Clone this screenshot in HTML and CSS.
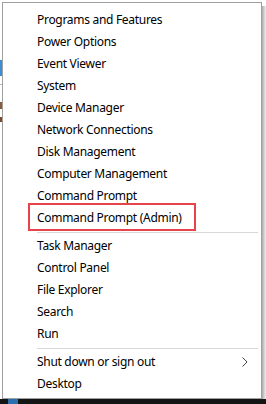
FILE: index.html
```html
<!DOCTYPE html>
<html>
<head>
  <link rel="stylesheet" href="styles.css">
</head>
<body>
  <div class="desk">
    <div class="edge">
      <span class="bit blue"></span>
      <span class="bit line"></span>
      <span class="bit brown"></span>
      <span class="bit brown2"></span>
    </div>
    <div class="menu">
      <div class="item">Programs and Features</div>
      <div class="item">Power Options</div>
      <div class="item">Event Viewer</div>
      <div class="item">System</div>
      <div class="item">Device Manager</div>
      <div class="item">Network Connections</div>
      <div class="item">Disk Management</div>
      <div class="item">Computer Management</div>
      <div class="item">Command Prompt</div>
      <div class="item marked">Command Prompt (Admin)</div>
      <div class="sep"></div>
      <div class="item">Task Manager</div>
      <div class="item">Control Panel</div>
      <div class="item">File Explorer</div>
      <div class="item">Search</div>
      <div class="item">Run</div>
      <div class="sep"></div>
      <div class="item sub">
        Shut down or sign out
        <svg class="chev" width="6" height="10" viewBox="0 0 6 10">
          <polyline points="0.5,0.5 5,5 0.5,9.5" fill="none" stroke="#444" stroke-width="1"/>
        </svg>
      </div>
      <div class="item">Desktop</div>
    </div>
    <div class="shadow"></div>
  </div>
  <div class="taskbar">
    <span class="start"></span>
  </div>
</body>
</html>
```

FILE: styles.css
```css
body {
  margin: 0;
  width: 266px;
  height: 404px;
  background-color: #ffffff;
  overflow: hidden;
  font-family: "Noto Sans", "Open Sans", sans-serif;
  font-size: 12px;
  letter-spacing: -0.3px;
  color: #000000;
}
.desk {
  display: flex;
  height: 399px;
  padding-top: 2px;
  box-sizing: border-box;
}
.edge {
  width: 2px;
  display: flex;
  flex-direction: column;
}
.bit {
  display: block;
  width: 2px;
}
.bit.blue {
  margin-top: 58px;
  height: 16px;
  background-color: #3b8ed4;
}
.bit.line {
  margin-top: 8px;
  height: 1px;
  background-color: #b8b8b8;
}
.bit.brown {
  margin-top: 17px;
  height: 7px;
  background-color: #8a5a3a;
}
.bit.brown2 {
  margin-top: 8px;
  height: 5px;
  background-color: #7a4a2a;
}
.menu {
  width: 260px;
  border: 1px solid #a0a0a0;
  background-color: #ffffff;
  padding: 6px 0 2px 0;
  box-sizing: border-box;
}
.item {
  position: relative;
  height: 22px;
  line-height: 22px;
  padding-left: 34px;
  white-space: nowrap;
}
.item.marked::after {
  content: "";
  position: absolute;
  left: 25px;
  top: -4px;
  width: 168px;
  height: 28px;
  border: 2px solid #e8434a;
  box-sizing: border-box;
}
.item.sub {
  display: flex;
  align-items: center;
  justify-content: space-between;
  padding-right: 13px;
}
.chev {
  display: block;
}
.sep {
  height: 1px;
  margin: 3px 3px 2px 34px;
  background-color: #d7d7d7;
}
.shadow {
  width: 4px;
  margin-top: 4px;
  background: linear-gradient(to right, #a8a8a8, #d0d0d0 50%, #ececec);
}
.taskbar {
  height: 5px;
  background-color: #141414;
  display: flex;
}
.start {
  display: block;
  width: 10px;
  margin-left: 8px;
  background-color: #2a6fb0;
}
```
